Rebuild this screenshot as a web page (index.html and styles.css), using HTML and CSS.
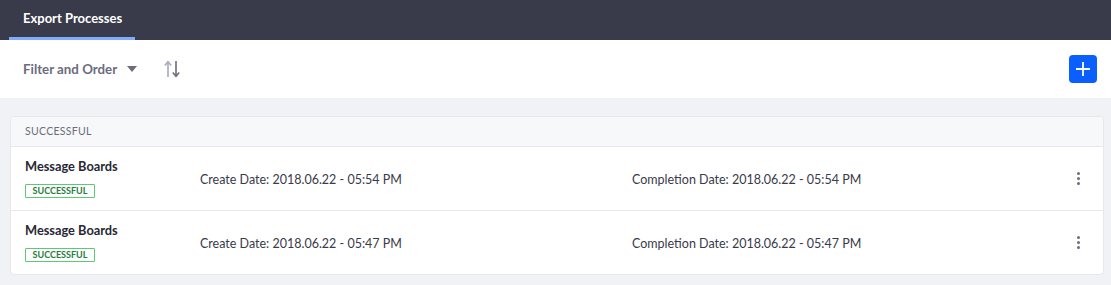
FILE: index.html
```html
<!DOCTYPE html>
<html lang="en">
<head>
    <meta charset="UTF-8">
    <title>Export Processes</title>
    <link rel="stylesheet" href="styles.css">
</head>
<body>

    <div class="navbar">
        <div class="nav-tab">Export Processes</div>
    </div>

    <div class="toolbar">
        <div class="filter">
            Filter and Order
            <svg class="caret" width="10" height="6" viewBox="0 0 10 6"><path d="M0 0 H10 L5 6 Z" fill="#6b6c7e"/></svg>
        </div>
        <svg class="sort" width="16" height="18" viewBox="0 0 16 18">
            <path d="M4 2 V17" stroke="#a7a9bc" stroke-width="1.6"/>
            <path d="M0.8 5.5 L4 1.8 L7.2 5.5" stroke="#a7a9bc" stroke-width="1.6" fill="none"/>
            <path d="M12 1 V16" stroke="#6b6c7e" stroke-width="1.6"/>
            <path d="M8.8 12.5 L12 16.2 L15.2 12.5" stroke="#6b6c7e" stroke-width="1.6" fill="none"/>
        </svg>
        <button class="add-btn">
            <svg width="16" height="16" viewBox="0 0 16 16"><path d="M8 1 V15 M1 8 H15" stroke="#fff" stroke-width="1.8"/></svg>
        </button>
    </div>

    <div class="main">
        <div class="card">
            <div class="card-header">SUCCESSFUL</div>

            <div class="row">
                <div class="col-title">
                    <div class="title">Message Boards</div>
                    <span class="badge">SUCCESSFUL</span>
                </div>
                <div class="col-date">Create Date: 2018.06.22 - 05:54 PM</div>
                <div class="col-date">Completion Date: 2018.06.22 - 05:54 PM</div>
                <div class="kebab"><span></span><span></span><span></span></div>
            </div>

            <div class="row">
                <div class="col-title">
                    <div class="title">Message Boards</div>
                    <span class="badge">SUCCESSFUL</span>
                </div>
                <div class="col-date">Create Date: 2018.06.22 - 05:47 PM</div>
                <div class="col-date">Completion Date: 2018.06.22 - 05:47 PM</div>
                <div class="kebab"><span></span><span></span><span></span></div>
            </div>
        </div>
    </div>

</body>
</html>
```

FILE: styles.css
```css
/* Global */
body {
    margin: 0;
    font-family: Lato, "Liberation Sans", sans-serif;
    background-color: #f1f2f5;
    color: #272833;
}

/* Top navigation */
.navbar {
    height: 40px;
    background-color: #393a4a;
    padding-left: 9px;
    display: flex;
}

.nav-tab {
    padding: 0 14px 0 14px;
    width: 98px;
    height: 37px;
    line-height: 37px;
    color: #fff;
    font-size: 13px;
    font-weight: bold;
    white-space: nowrap;
    border-bottom: 3px solid #80acff;
}

/* Management toolbar */
.toolbar {
    height: 58px;
    background-color: #fff;
    display: flex;
    align-items: center;
    padding: 0 14px 0 23px;
}

.filter {
    display: flex;
    align-items: center;
    color: #6b6c7e;
    font-size: 13.3px;
    font-weight: bold;
}

.caret {
    margin-left: 10px;
}

.sort {
    margin-left: 27px;
}

.add-btn {
    margin-left: auto;
    width: 28px;
    height: 28px;
    border: none;
    border-radius: 4px;
    background-color: #0b5fff;
    display: flex;
    align-items: center;
    justify-content: center;
    padding: 0;
}

/* List */
.main {
    padding: 18px 7px 10px 10px;
}

.card {
    background-color: #fff;
    border: 1px solid #e7e7ed;
    border-radius: 4px;
}

.card-header {
    height: 29px;
    line-height: 29px;
    padding-left: 14px;
    background-color: #f7f8f9;
    border-bottom: 1px solid #e7e7ed;
    border-radius: 4px 4px 0 0;
    color: #6b6c7e;
    font-size: 10.5px;
    letter-spacing: 0.3px;
}

.row {
    height: 63px;
    display: flex;
    align-items: center;
    padding-left: 14px;
    border-bottom: 1px solid #e7e7ed;
}

.row:last-child {
    border-bottom: none;
}

.col-title {
    width: 175px;
    flex-shrink: 0;
    padding-bottom: 2px;
}

.title {
    font-size: 12.8px;
    font-weight: bold;
    margin-bottom: 4px;
}

.badge {
    display: inline-block;
    width: 68px;
    height: 12px;
    line-height: 12px;
    border: 1px solid #5aca75;
    border-radius: 1px;
    color: #287d3c;
    font-size: 9px;
    font-weight: bold;
    text-align: center;
}

.col-date {
    width: 432px;
    flex-shrink: 0;
    font-size: 12.5px;
    color: #393a4a;
    padding-top: 2px;
}

.kebab {
    margin-left: auto;
    margin-right: 23px;
    display: flex;
    flex-direction: column;
    gap: 2px;
}

.kebab span {
    width: 3px;
    height: 3px;
    border-radius: 50%;
    background-color: #6b6c7e;
}
```
